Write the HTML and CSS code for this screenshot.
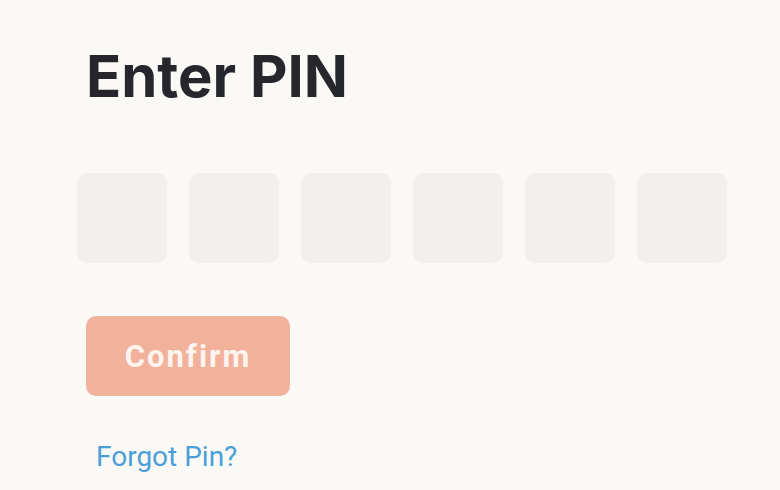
FILE: index.html
```html
<!DOCTYPE html>
<html>
<head>
<meta charset="utf-8">
<link rel="stylesheet" href="styles.css">
</head>
<body>
<main class="page">
  <h1 class="title">Enter PIN</h1>
  <div class="pins">
    <div class="pin"></div>
    <div class="pin"></div>
    <div class="pin"></div>
    <div class="pin"></div>
    <div class="pin"></div>
    <div class="pin"></div>
  </div>
  <button class="confirm">Confirm</button>
  <a class="forgot" href="#">Forgot Pin?</a>
</main>
</body>
</html>
```
FILE: styles.css
```css
html, body {
  margin: 0;
  padding: 0;
  background: #fbf9f5;
}
body {
  width: 780px;
  height: 490px;
  overflow: hidden;
  font-family: Roboto, "Liberation Sans", sans-serif;
}
.page {
  display: flex;
  flex-direction: column;
  align-items: flex-start;
  padding: 0 0 0 86px;
}
.title {
  margin: 38px 0 0 0;
  font-family: Inter, Roboto, sans-serif;
  font-size: 58px;
  line-height: 76px;
  font-weight: 700;
  color: #26272c;
}
.pins {
  display: flex;
  gap: 22px;
  margin: 59px 0 0 -9px;
}
.pin {
  width: 90px;
  height: 90px;
  border-radius: 10px;
  background: #f2f0ee;
}
.confirm {
  margin-top: 53px;
  width: 204px;
  height: 80px;
  border: none;
  border-radius: 10px;
  background: #f2b19b;
  color: #fdf4ef;
  font-family: Roboto, "Liberation Sans", sans-serif;
  font-size: 31px;
  font-weight: 700;
  letter-spacing: 2px;
  padding: 0;
}
.forgot {
  margin-top: 44px;
  margin-left: 10px;
  font-size: 28px;
  color: #4a9fd9;
  text-decoration: none;
}
```
